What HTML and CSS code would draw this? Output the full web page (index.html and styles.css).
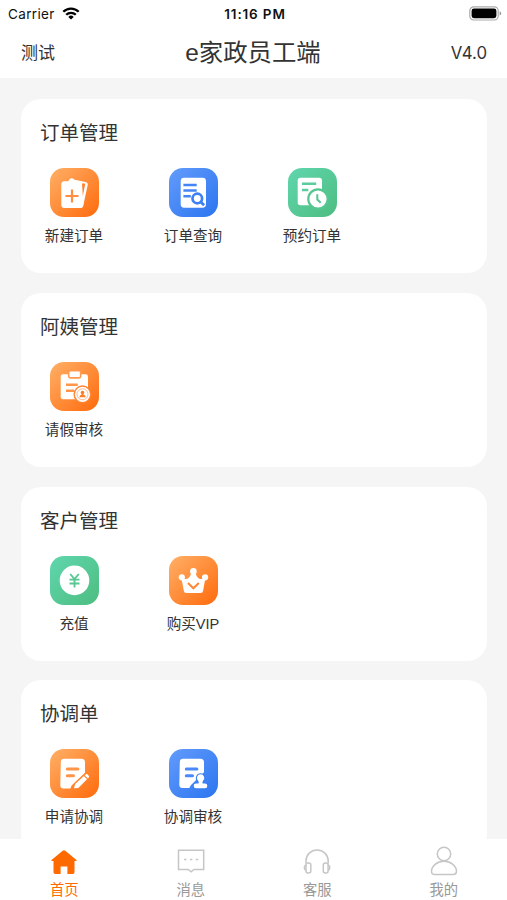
FILE: index.html
```html
<!DOCTYPE html>
<html lang="zh-CN">

<head>
    <meta charset="UTF-8">
    <meta name="viewport" content="width=device-width, initial-scale=1.0">
    <title>e家政员工端</title>
    <link rel="stylesheet" href="styles.css">
</head>

<body>
    <!-- gradients shared by the icons -->
    <svg class="defs" width="0" height="0">
        <defs>
            <linearGradient id="orange" x1="0" y1="0" x2="1" y2="1">
                <stop offset="0" stop-color="#ffb067" />
                <stop offset="1" stop-color="#ff6a0c" />
            </linearGradient>
            <linearGradient id="blue" x1="0" y1="0" x2="1" y2="1">
                <stop offset="0" stop-color="#629bfb" />
                <stop offset="1" stop-color="#2c75f0" />
            </linearGradient>
            <linearGradient id="green" x1="0" y1="0" x2="1" y2="1">
                <stop offset="0" stop-color="#60d6ae" />
                <stop offset="1" stop-color="#4dbd80" />
            </linearGradient>
        </defs>
    </svg>

    <div class="app">
        <header>
            <div class="status">
                <div class="carrier">
                    <span>Carrier</span>
                    <svg width="18" height="13" viewBox="0 0 18 13" fill="none" stroke="#000" stroke-width="2.3">
                        <path d="M1.3 4.8a10.8 10.8 0 0 1 15.4 0" />
                        <path d="M4.2 7.8a6.8 6.8 0 0 1 9.6 0" />
                        <path d="M9 12.6L6.3 9.9a3.9 3.9 0 0 1 5.4 0z" fill="#000" stroke="none" />
                    </svg>
                </div>
                <div class="time">11:16 PM</div>
                <svg class="battery" width="33" height="15" viewBox="0 0 33 15">
                    <rect x=".8" y=".8" width="28.4" height="13.2" rx="4" fill="#fff" stroke="#aaa" stroke-width="1.2" />
                    <rect x="2.6" y="2.6" width="24.8" height="9.6" rx="2.4" />
                    <path d="M30.6 5.2q1.6.6 1.6 2.2t-1.6 2.2z" fill="#999" />
                </svg>
            </div>
            <div class="nav">
                <span class="left">测试</span>
                <h1>e家政员工端</h1>
                <span class="right">V4.0</span>
            </div>
        </header>

        <main>
            <section>
                <h2>订单管理</h2>
                <div class="list">
                    <a class="item">
                        <svg class="icon" viewBox="0 0 49 49">
                            <rect width="49" height="49" rx="14" fill="url(#orange)" />
                            <path d="M18 13.500l2-2.700q1-.9 2.400-.6l2.300 1.600 10.800 2.100q2.600.6 2.200 3.100L33.400 37q-.4 2-2.400 3z" fill="#fff" />
                            <rect x="11.300" y="13.200" width="22" height="26.800" rx="3" fill="#fff" />
                            <path d="M32 15.500h3.300L32.800 28z" fill="#ff812c" />
                            <path d="M22 21.500v13M15.500 28h13" stroke="#ff8f3e" stroke-width="2.200" />
                        </svg>
                        <span>新建订单</span>
                    </a>
                    <a class="item">
                        <svg class="icon" viewBox="0 0 49 49">
                            <rect width="49" height="49" rx="14" fill="url(#blue)" />
                            <rect x="11.700" y="9.700" width="25.300" height="30" rx="3.400" fill="#fff" />
                            <path d="M14.400 17h13.300M14.400 22.600h13.300M14.400 28.200h7.400" stroke="#4485f5" stroke-width="2.500" />
                            <circle cx="28.300" cy="30.500" r="4.800" fill="#fff" stroke="#3c80f4" stroke-width="2.700" />
                            <path d="M31.800 34l3.300 3.200" stroke="#3c80f4" stroke-width="2.800" />
                        </svg>
                        <span>订单查询</span>
                    </a>
                    <a class="item">
                        <svg class="icon" viewBox="0 0 49 49">
                            <rect width="49" height="49" rx="14" fill="url(#green)" />
                            <rect x="9.700" y="9.700" width="24.300" height="27.600" rx="2.800" fill="#fff" />
                            <path d="M14 15.700h14.200M14 22h6.300" stroke="#5bcc9e" stroke-width="2.400" />
                            <circle cx="30" cy="31" r="9.700" fill="#fff" stroke="#55c690" stroke-width="2.200" />
                            <path d="M29.300 26.200v5.300l3.400 3.200" fill="none" stroke="#55c690" stroke-width="2" />
                        </svg>
                        <span>预约订单</span>
                    </a>
                </div>
            </section>

            <section>
                <h2>阿姨管理</h2>
                <div class="list">
                    <a class="item">
                        <svg class="icon" viewBox="0 0 49 49">
                            <rect width="49" height="49" rx="14" fill="url(#orange)" />
                            <rect x="10.700" y="12.300" width="27.300" height="25" rx="2.400" fill="#fff" />
                            <rect x="18.700" y="8.700" width="12" height="7.200" rx="1.600" fill="#fff" stroke="#ff9b50" stroke-width="1.600" />
                            <path d="M16 22.700h11.800M16 28.700h8" stroke="#ff964a" stroke-width="2.500" />
                            <circle cx="32.500" cy="32.300" r="9" fill="#ff822f" />
                            <circle cx="32.500" cy="32.300" r="7.600" fill="#fff" />
                            <circle cx="32.500" cy="32.300" r="5.500" fill="none" stroke="#ffb27c" stroke-width=".9" />
                            <circle cx="32.500" cy="30.500" r="1.800" fill="#ff7b25" />
                            <path d="M31.800 31h1.400l.4 1.700q2 .4 2 2.600h-6.200q0-2.200 2-2.600z" fill="#ff7b25" />
                        </svg>
                        <span>请假审核</span>
                    </a>
                </div>
            </section>

            <section>
                <h2>客户管理</h2>
                <div class="list">
                    <a class="item">
                        <svg class="icon" viewBox="0 0 49 49">
                            <rect width="49" height="49" rx="14" fill="url(#green)" />
                            <circle cx="24.500" cy="24.400" r="14.800" fill="#fff" />
                            <path d="M20.200 18l4.300 5 4.300-5M19.500 23.600h10M19.500 27.500h10M24.500 23v8.500" fill="none" stroke="#57c894" stroke-width="1.900" />
                        </svg>
                        <span>充值</span>
                    </a>
                    <a class="item">
                        <svg class="icon" viewBox="0 0 49 49">
                            <rect width="49" height="49" rx="14" fill="url(#orange)" />
                            <g fill="#fff">
                                <circle cx="12.800" cy="21.300" r="3.100" />
                                <circle cx="24.400" cy="15.400" r="3.300" />
                                <circle cx="36.100" cy="21.300" r="3.100" />
                                <path d="M12.500 22.500l3.800.6q4.200.4 6-6h4.200q1.800 6.400 6 6l3.800-.6-2.200 12.200q-.3 2.200-2.500 2.200H17.300q-2.200 0-2.500-2.200z" />
                            </g>
                            <path d="M19 27l5.400 5.300 5.400-5.300" fill="none" stroke="#ff8736" stroke-width="2" />
                        </svg>
                        <span>购买VIP</span>
                    </a>
                </div>
            </section>

            <section>
                <h2>协调单</h2>
                <div class="list">
                    <a class="item">
                        <svg class="icon" viewBox="0 0 49 49">
                            <rect width="49" height="49" rx="14" fill="url(#orange)" />
                            <path d="M14 9.700h17.500q3.500 0 3.500 3.500v10.500L21.800 36.300l-1.500 3.200H13.500q-3.200 0-3.200-3.200l.5-23.300q.2-3.300 3.200-3.300z" fill="#fff" />
                            <path d="M17.300 20h10.600M17.300 26.800h6.200" stroke="#ff9549" stroke-width="3" stroke-linecap="round" />
                            <path d="M24 39.300l1.200-4.400 8.700-7.900 3.100 3.300-8.700 8.600zM34.700 26.200l1.200-1q.8-.6 1.500.1l1.500 1.600q.6.800-.1 1.500l-1 1z" fill="#fff" />
                        </svg>
                        <span>申请协调</span>
                    </a>
                    <a class="item">
                        <svg class="icon" viewBox="0 0 49 49">
                            <rect width="49" height="49" rx="14" fill="url(#blue)" />
                            <path d="M14 9.700h17.500q3.500 0 3.500 3.500v10L21.800 36.300l-1.500 2.700H13.500q-3.200 0-3.200-3.200l.5-22.800q.2-3.300 3.200-3.300z" fill="#fff" />
                            <path d="M17.300 20h10.600M17.300 26.800h6.200" stroke="#4a89f7" stroke-width="3" stroke-linecap="round" />
                            <path d="M31.600 25.300a3.700 3.700 0 0 1 2.300 6.600q-.8 1.200-.2 2.600h2.300q2.300 0 2.300 2.300v.2q0 2.200-2.200 2.200h-9.200q-2.200 0-2.200-2.200v-.2q0-2.300 2.300-2.300h2.500q.6-1.400-.2-2.600a3.700 3.700 0 0 1 2.300-6.600z" fill="#fff" stroke="#397ef3" stroke-width="2" paint-order="stroke" />
                        </svg>
                        <span>协调审核</span>
                    </a>
                </div>
            </section>
        </main>

        <footer>
            <a class="tab active">
                <svg width="28" height="28" viewBox="0 0 28 28">
                    <path d="M14 2.200q.7 0 1.300.6L26.500 12q.7.700-.3.900h-1.700v11.300q0 1.800-1.800 1.800h-5.300v-7.500h-6.800V26H5.300q-1.800 0-1.800-1.800V12.900H1.800q-1-.2-.3-.9L12.700 2.800q.6-.6 1.300-.6z" fill="#ff6a00" />
                </svg>
                <span>首页</span>
            </a>
            <a class="tab">
                <svg width="28" height="28" viewBox="0 0 28 28" fill="none" stroke="#c6c6c6" stroke-width="1.500">
                    <path d="M1.500 2.200h25.200v19.300H17l-2.900 2.300-2.900-2.300H1.500z" />
                    <path d="M7 11.500h2.500M12.900 11.500h2.500M18.800 11.500h2.500" />
                </svg>
                <span>消息</span>
            </a>
            <a class="tab">
                <svg width="28" height="28" viewBox="0 0 28 28" fill="none" stroke="#c6c6c6" stroke-width="1.500">
                    <path d="M3 15.500V13a11.100 11.100 0 0 1 22.200 0v2.500" />
                    <rect x="3" y="15" width="4.800" height="10" rx="2" />
                    <rect x="20.300" y="15" width="4.800" height="10" rx="2" />
                    <path d="M3 17q-1.700.5-1.700 2.500T3 22M25.100 17q1.700.5 1.700 2.500T25.100 22" />
                </svg>
                <span>客服</span>
            </a>
            <a class="tab">
                <svg width="28" height="30" viewBox="0 0 28 30" fill="none" stroke="#c6c6c6" stroke-width="1.500">
                    <circle cx="14" cy="8" r="6.700" />
                    <path d="M14 15.300c7 0 12.500 4.700 12.500 10q0 3.200-3.200 3.200H4.700q-3.200 0-3.200-3.200c0-5.300 5.500-10 12.500-10z" />
                </svg>
                <span>我的</span>
            </a>
        </footer>
    </div>
</body>

</html>
```

FILE: styles.css
```css
* {
    box-sizing: border-box;
}

body {
    margin: 0;
    font-family: "Liberation Sans", "Noto Sans CJK SC", sans-serif;
    color: #333;
    background-color: #f5f5f5;
}

.defs {
    position: absolute;
}

.app {
    height: 900px;
    display: flex;
    flex-direction: column;
    overflow: hidden;
}

header {
    height: 78px;
    flex-shrink: 0;
    background-color: #fff;
}

.status {
    height: 27px;
    padding: 0 5px 0 8px;
    display: grid;
    grid-template-columns: 1fr auto 1fr;
    align-items: center;
    font-family: Inter, sans-serif;
    font-size: 13.5px;
    color: #111;
}

.carrier {
    display: flex;
    align-items: center;
    gap: 7px;
    letter-spacing: 0.35px;
}

.time {
    font-size: 13.5px;
    font-weight: 600;
    letter-spacing: 0.85px;
}

.battery {
    justify-self: end;
}

.nav {
    height: 51px;
    padding: 0 20px 0 21px;
    display: grid;
    grid-template-columns: 1fr auto 1fr;
    align-items: center;
    font-size: 17px;
}

.nav .left {
    padding-bottom: 2px;
}

.nav .right {
    text-align: right;
    font-family: Inter, sans-serif;
    font-size: 16.8px;
}

h1 {
    margin: 0 2px 0 0;
    font-size: 24.4px;
    font-weight: 400;
    line-height: 50px;
}

main {
    flex: 1;
    min-height: 0;
    padding: 21px 20px 0 21px;
    overflow: hidden;
}

section {
    height: 174px;
    margin-bottom: 19.8px;
    padding: 20px 19px 0;
    border-radius: 20px;
    background-color: #fff;
}

h2 {
    margin: 0;
    font-size: 19.5px;
    font-weight: 400;
    line-height: 29px;
}

.list {
    display: flex;
    gap: 59px;
    margin-top: 20px;
    padding-left: 4px;
}

.item {
    width: 60px;
    display: flex;
    flex-direction: column;
    align-items: center;
    font-size: 14.6px;
    line-height: 20px;
    white-space: nowrap;
}

.icon {
    width: 49px;
    height: 49px;
    margin-bottom: 9px;
}

footer {
    height: 61px;
    flex-shrink: 0;
    display: flex;
    padding-left: 1px;
    background-color: #fff;
}

.tab {
    flex: 1;
    display: flex;
    flex-direction: column;
    align-items: center;
    justify-content: flex-end;
    font-size: 14.3px;
    line-height: 20px;
    color: #999;
}

.tab svg {
    margin-bottom: 4px;
}

.active {
    color: #ff6a00;
}
```
